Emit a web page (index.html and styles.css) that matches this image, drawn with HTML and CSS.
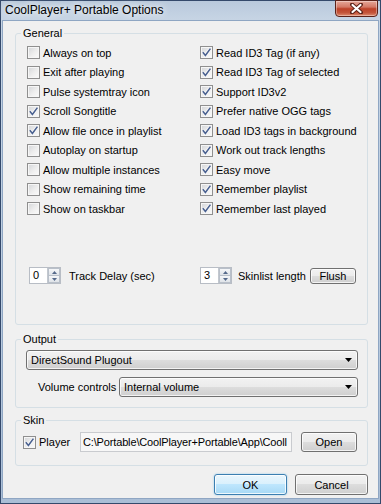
FILE: index.html
```html
<!DOCTYPE html>
<html>
<head>
<meta charset="utf-8">
<title>CoolPlayer+ Portable Options</title>
<link rel="stylesheet" href="styles.css">
</head>
<body>
<div class="window">
  <div class="titlebar">
    <span class="title">CoolPlayer+ Portable Options</span>
    <span class="close">
      <svg width="13" height="11" viewBox="0 0 13 11">
        <path d="M2 1.5 L11 9.5 M11 1.5 L2 9.5" stroke="#5a2016" stroke-width="4" stroke-linecap="round" fill="none"/>
        <path d="M2.5 2 L10.5 9 M10.5 2 L2.5 9" stroke="#ffffff" stroke-width="2.2" stroke-linecap="round" fill="none"/>
      </svg>
    </span>
  </div>
  <div class="client">
    <fieldset class="group general">
      <legend>General</legend>
      <div class="checks">
        <div class="chk"><span class="cb"></span>Always on top</div>
        <div class="chk"><span class="cb"></span>Exit after playing</div>
        <div class="chk"><span class="cb"></span>Pulse systemtray icon</div>
        <div class="chk"><span class="cb on"><svg width="11" height="11" viewBox="0 0 11 11"><path d="M1.8 5.2 L4.4 8.4 L9.4 1.6" stroke="#fff" stroke-width="3" fill="none" opacity=".7"/><path d="M1.8 5.2 L4.4 8.4 L9.4 1.6" stroke="#4a6190" stroke-width="1.6" fill="none"/></svg></span>Scroll Songtitle</div>
        <div class="chk"><span class="cb on"><svg width="11" height="11" viewBox="0 0 11 11"><path d="M1.8 5.2 L4.4 8.4 L9.4 1.6" stroke="#fff" stroke-width="3" fill="none" opacity=".7"/><path d="M1.8 5.2 L4.4 8.4 L9.4 1.6" stroke="#4a6190" stroke-width="1.6" fill="none"/></svg></span>Allow file once in playlist</div>
        <div class="chk"><span class="cb"></span>Autoplay on startup</div>
        <div class="chk"><span class="cb"></span>Allow multiple instances</div>
        <div class="chk"><span class="cb"></span>Show remaining time</div>
        <div class="chk"><span class="cb"></span>Show on taskbar</div>

        <div class="chk"><span class="cb on"><svg width="11" height="11" viewBox="0 0 11 11"><path d="M1.8 5.2 L4.4 8.4 L9.4 1.6" stroke="#fff" stroke-width="3" fill="none" opacity=".7"/><path d="M1.8 5.2 L4.4 8.4 L9.4 1.6" stroke="#4a6190" stroke-width="1.6" fill="none"/></svg></span>Read ID3 Tag (if any)</div>
        <div class="chk"><span class="cb on"><svg width="11" height="11" viewBox="0 0 11 11"><path d="M1.8 5.2 L4.4 8.4 L9.4 1.6" stroke="#fff" stroke-width="3" fill="none" opacity=".7"/><path d="M1.8 5.2 L4.4 8.4 L9.4 1.6" stroke="#4a6190" stroke-width="1.6" fill="none"/></svg></span>Read ID3 Tag of selected</div>
        <div class="chk"><span class="cb on"><svg width="11" height="11" viewBox="0 0 11 11"><path d="M1.8 5.2 L4.4 8.4 L9.4 1.6" stroke="#fff" stroke-width="3" fill="none" opacity=".7"/><path d="M1.8 5.2 L4.4 8.4 L9.4 1.6" stroke="#4a6190" stroke-width="1.6" fill="none"/></svg></span>Support ID3v2</div>
        <div class="chk"><span class="cb on"><svg width="11" height="11" viewBox="0 0 11 11"><path d="M1.8 5.2 L4.4 8.4 L9.4 1.6" stroke="#fff" stroke-width="3" fill="none" opacity=".7"/><path d="M1.8 5.2 L4.4 8.4 L9.4 1.6" stroke="#4a6190" stroke-width="1.6" fill="none"/></svg></span>Prefer native OGG tags</div>
        <div class="chk"><span class="cb on"><svg width="11" height="11" viewBox="0 0 11 11"><path d="M1.8 5.2 L4.4 8.4 L9.4 1.6" stroke="#fff" stroke-width="3" fill="none" opacity=".7"/><path d="M1.8 5.2 L4.4 8.4 L9.4 1.6" stroke="#4a6190" stroke-width="1.6" fill="none"/></svg></span>Load ID3 tags in background</div>
        <div class="chk"><span class="cb on"><svg width="11" height="11" viewBox="0 0 11 11"><path d="M1.8 5.2 L4.4 8.4 L9.4 1.6" stroke="#fff" stroke-width="3" fill="none" opacity=".7"/><path d="M1.8 5.2 L4.4 8.4 L9.4 1.6" stroke="#4a6190" stroke-width="1.6" fill="none"/></svg></span>Work out track lengths</div>
        <div class="chk"><span class="cb on"><svg width="11" height="11" viewBox="0 0 11 11"><path d="M1.8 5.2 L4.4 8.4 L9.4 1.6" stroke="#fff" stroke-width="3" fill="none" opacity=".7"/><path d="M1.8 5.2 L4.4 8.4 L9.4 1.6" stroke="#4a6190" stroke-width="1.6" fill="none"/></svg></span>Easy move</div>
        <div class="chk"><span class="cb on"><svg width="11" height="11" viewBox="0 0 11 11"><path d="M1.8 5.2 L4.4 8.4 L9.4 1.6" stroke="#fff" stroke-width="3" fill="none" opacity=".7"/><path d="M1.8 5.2 L4.4 8.4 L9.4 1.6" stroke="#4a6190" stroke-width="1.6" fill="none"/></svg></span>Remember playlist</div>
        <div class="chk"><span class="cb on"><svg width="11" height="11" viewBox="0 0 11 11"><path d="M1.8 5.2 L4.4 8.4 L9.4 1.6" stroke="#fff" stroke-width="3" fill="none" opacity=".7"/><path d="M1.8 5.2 L4.4 8.4 L9.4 1.6" stroke="#4a6190" stroke-width="1.6" fill="none"/></svg></span>Remember last played</div>
      </div>
      <div class="spinrow">
        <div class="spinitem first">
          <div class="spin">
            <span class="val">0</span>
            <span class="arr">
              <span class="up"><svg width="5" height="3" viewBox="0 0 5 3"><path d="M0 3 L2.5 0 L5 3 Z" fill="#55698a"/></svg></span>
              <span class="down"><svg width="5" height="3" viewBox="0 0 5 3"><path d="M0 0 L2.5 3 L5 0 Z" fill="#55698a"/></svg></span>
            </span>
          </div>
          <span class="spinlabel">Track Delay (sec)</span>
        </div>
        <div class="spinitem second">
          <div class="spin">
            <span class="val">3</span>
            <span class="arr">
              <span class="up"><svg width="5" height="3" viewBox="0 0 5 3"><path d="M0 3 L2.5 0 L5 3 Z" fill="#55698a"/></svg></span>
              <span class="down"><svg width="5" height="3" viewBox="0 0 5 3"><path d="M0 0 L2.5 3 L5 0 Z" fill="#55698a"/></svg></span>
            </span>
          </div>
          <span class="spinlabel">Skinlist length</span>
          <span class="btn flush">Flush</span>
        </div>
      </div>
    </fieldset>

    <fieldset class="group output">
      <legend>Output</legend>
      <div class="outbody">
        <div class="combo"><span>DirectSound Plugout</span><svg width="7" height="4" viewBox="0 0 7 4"><path d="M0 0 L7 0 L3.5 4 Z" fill="#000"/></svg></div>
        <div class="volrow">
          <span class="vollabel">Volume controls</span>
          <div class="combo"><span>Internal volume</span><svg width="7" height="4" viewBox="0 0 7 4"><path d="M0 0 L7 0 L3.5 4 Z" fill="#000"/></svg></div>
        </div>
      </div>
    </fieldset>

    <fieldset class="group skin">
      <legend>Skin</legend>
      <div class="skinrow">
        <div class="chk player"><span class="cb on"><svg width="11" height="11" viewBox="0 0 11 11"><path d="M1.8 5.2 L4.4 8.4 L9.4 1.6" stroke="#fff" stroke-width="3" fill="none" opacity=".7"/><path d="M1.8 5.2 L4.4 8.4 L9.4 1.6" stroke="#4a6190" stroke-width="1.6" fill="none"/></svg></span>Player</div>
        <div class="path">C:\Portable\CoolPlayer+Portable\App\Cooll</div>
        <span class="btn open">Open</span>
      </div>
    </fieldset>

    <div class="actions">
      <span class="btn default">OK</span>
      <span class="btn">Cancel</span>
    </div>
  </div>
</div>
</body>
</html>
```

FILE: styles.css
```css
* { box-sizing: border-box; }
html, body { margin: 0; padding: 0; }
body {
  width: 381px;
  height: 504px;
  overflow: hidden;
  font-family: "Liberation Sans", Arial, sans-serif;
  font-size: 11px;
  color: #000;
  background: #a9bcd2;
}
.window {
  width: 381px;
  height: 504px;
  display: flex;
  flex-direction: column;
  border: 1px solid #34496b;
  background: linear-gradient(to bottom, #b9c9dc 0, #c6d4e4 18px, #bccde0 60%, #aabed6 100%);
}
.titlebar {
  height: 20px;
  flex: none;
  display: flex;
  justify-content: space-between;
  align-items: flex-start;
  padding: 0 2px 0 4px;
}
.title {
  margin-top: 1px;
  line-height: 16px;
  font-size: 12px;
  color: #000;
  text-shadow: 0 0 6px #fff, 0 0 10px rgba(255,255,255,.8);
}
.close {
  width: 43px;
  height: 17px;
  flex: none;
  margin-top: -1px;
  border: 1px solid #5b2219;
  border-radius: 0 0 4px 4px;
  background: linear-gradient(#e6a899 0, #d47966 40%, #bd4128 52%, #c3553a 78%, #e08c70 100%);
  box-shadow: inset 0 0 0 1px rgba(255,255,255,.35);
  display: flex;
  align-items: center;
  justify-content: center;
}
.client {
  flex: 1;
  margin: 0 2px 5px;
  background: #f0f0f0;
  box-shadow: 0 0 0 1px #8fa6c3;
  display: flex;
  flex-direction: column;
}
.group {
  margin: 0 10px 0 12px;
  padding: 0;
  min-width: 0;
  border: 1px solid #d5dfe5;
  border-radius: 3px;
}
.group legend {
  margin-left: 5px;
  padding: 0 2px;
  line-height: 12px;
  font-size: 11px;
}
.general { margin-top: 6px; }
.checks {
  display: grid;
  grid-template-rows: repeat(9, 19.5px);
  grid-template-columns: 173px 1fr;
  grid-auto-flow: column;
  padding: 4px 0 0 11px;
}
.chk {
  display: flex;
  align-items: center;
  gap: 3px;
  white-space: nowrap;
}
.cb {
  width: 13px;
  height: 13px;
  flex: none;
  border: 1px solid #8f8f8f;
  background: linear-gradient(135deg, #d3d5d8 0, #eeeeee 55%, #fbfbfb 100%);
  box-shadow: inset 0 0 0 1px #f6f6f6;
  display: flex;
  align-items: center;
  justify-content: center;
}
.spinrow {
  display: flex;
  align-items: center;
  height: 17px;
  margin: 48.5px 0 40px 0;
  padding-left: 13px;
}
.spinitem { display: flex; align-items: center; }
.spinitem.first { width: 171px; }
.spin {
  width: 32px;
  height: 17px;
  display: flex;
  border: 1px solid #b8bdc5;
  background: #fff;
}
.spin .val {
  flex: 1;
  padding-left: 3px;
  line-height: 15px;
}
.spin .arr {
  width: 13px;
  display: flex;
  flex-direction: column;
  border-left: 1px solid #c3c8cf;
}
.spin .arr span {
  flex: 1;
  display: flex;
  align-items: center;
  justify-content: center;
  background: linear-gradient(#f6f7f9, #dfe3e8);
  border: 1px solid #b9c0ca;
}
.spin .arr .down { border-top: none; }
.spinitem.first .spinlabel { margin-left: 8px; }
.spinitem.second .spinlabel { margin-left: 6px; }
.btn {
  display: flex;
  align-items: center;
  justify-content: center;
  border: 1px solid #707070;
  border-radius: 3px;
  background: linear-gradient(#f2f2f2 0, #ebebeb 50%, #dddddd 50%, #cfcfcf 100%);
  box-shadow: inset 0 0 0 1px rgba(255,255,255,.75);
  white-space: nowrap;
}
.flush { width: 46px; height: 16px; margin-left: 4px; }
.output { margin-top: 8px; }
.outbody {
  display: flex;
  flex-direction: column;
  gap: 7px;
  padding: 5px 9px 10px 10px;
}
.combo {
  height: 20px;
  display: flex;
  align-items: center;
  justify-content: space-between;
  padding: 0 5px 0 4px;
  border: 1px solid #707070;
  border-radius: 3px;
  background: linear-gradient(#f2f2f2 0, #ebebeb 50%, #dddddd 50%, #cfcfcf 100%);
  box-shadow: inset 0 0 0 1px rgba(255,255,255,.75);
}
.volrow { display: flex; align-items: center; }
.vollabel { width: 93px; padding-left: 12px; flex: none; }
.volrow .combo { flex: 1; }
.skin { margin-top: 6px; }
.skinrow {
  display: flex;
  align-items: center;
  padding: 6px 0 13px 7px;
}
.player { width: 57px; flex: none; }
.path {
  width: 212px;
  height: 20px;
  flex: none;
  border: 1px solid #c9cbcf;
  background: #f7f7f7;
  padding-left: 2px;
  line-height: 18px;
  letter-spacing: -0.15px;
  overflow: hidden;
  white-space: nowrap;
}
.open { width: 56px; height: 20px; margin-left: 9px; }
.actions {
  display: flex;
  justify-content: flex-end;
  gap: 8px;
  margin: 8px 10px 0 0;
}
.actions .btn { width: 73px; height: 21px; }
.actions .btn.default {
  border-color: #3c7fb1;
  background: linear-gradient(#eaf6fd 0, #d9f0fc 50%, #bee6fd 50%, #a7d9f5 100%);
  box-shadow: inset 0 0 0 1px rgba(255,255,255,.8), 0 0 2px #8cc8ec;
}
```
